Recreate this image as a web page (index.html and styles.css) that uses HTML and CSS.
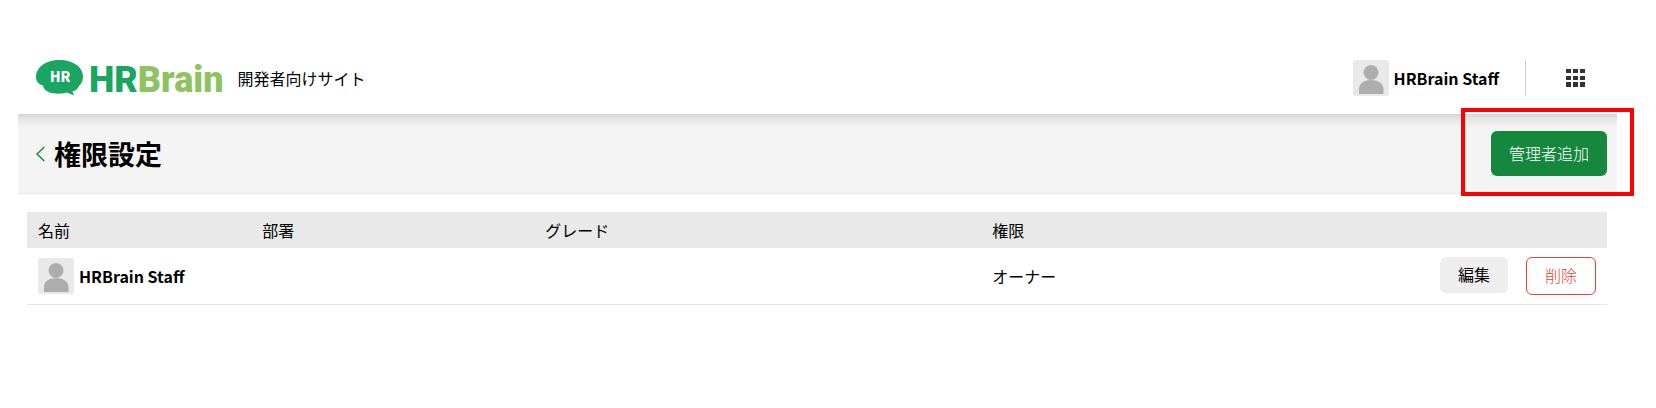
FILE: index.html
```
<!DOCTYPE html>
<html lang="ja">

<head>
    <meta charset="UTF-8">
    <meta name="viewport" content="width=device-width, initial-scale=1.0">
    <title>権限設定 | HRBrain</title>
    <link rel="stylesheet" href="styles.css">
</head>

<body>
    <header class="header">
        <a href="#" class="logo">
            <svg class="logo-mark" viewBox="0 0 47 36" aria-hidden="true">
                <path fill="#18a661" d="M23.500 0C37 0 47 7 47 16.500C47 21 45.500 24 43 26C42 29 39 31 36.500 31.500L38 35.500L31 32.500C23 35 8 34 7 25.500C2.500 24.500 0 21 0 17C0 7 10 0 23.500 0Z" />
                <text class="logo-mark-text" x="24" y="22" text-anchor="middle">HR</text>
            </svg>
            <span class="logo-text"><span class="logo-hr">HR</span><span class="logo-brain">Brain</span></span>
        </a>
        <span class="site-name">開発者向けサイト</span>
        <div class="account">
            <svg class="avatar" viewBox="0 0 36 36" aria-hidden="true">
                <rect width="36" height="36" rx="3" fill="#e9e9e9" />
                <circle cx="18" cy="12.500" r="7.500" fill="#adadad" />
                <path fill="#adadad" d="M6 34V29C6 23 12 20 18 20S30.500 23 30.500 29V34Z" />
            </svg>
            <span class="user-name">HRBrain Staff</span>
        </div>
        <button type="button" class="menu-button" aria-label="メニュー">
            <svg class="menu-icon" viewBox="0 0 19 18" aria-hidden="true">
                <path fill="#333" d="M0 0h5v4H0zM7 0h5v4H7zM14 0h5v4h-5zM0 7h5v4H0zM7 7h5v4H7zM14 7h5v4h-5zM0 13h5v5H0zM7 13h5v5H7zM14 13h5v5h-5z" />
            </svg>
        </button>
    </header>

    <main>
        <div class="title-bar">
            <a href="#" class="back" aria-label="戻る">
                <svg class="back-icon" viewBox="0 0 9 16" aria-hidden="true">
                    <path fill="none" stroke="#15883e" stroke-width="1.500" d="M8.300 1L1 8L8.300 15" />
                </svg>
            </a>
            <h1 class="title">権限設定</h1>
            <div class="title-action">
                <button type="button" class="button button-primary">管理者追加</button>
            </div>
        </div>

        <div class="content">
            <table class="admin-table">
                <thead>
                    <tr>
                        <th class="col-name">名前</th>
                        <th class="col-department">部署</th>
                        <th class="col-grade">グレード</th>
                        <th>権限</th>
                        <th class="col-actions"></th>
                    </tr>
                </thead>
                <tbody>
                    <tr>
                        <td>
                            <div class="user">
                                <svg class="avatar" viewBox="0 0 36 36" aria-hidden="true">
                                    <rect width="36" height="36" rx="3" fill="#e9e9e9" />
                                    <circle cx="18" cy="12.500" r="7.500" fill="#adadad" />
                                    <path fill="#adadad" d="M6 34V29C6 23 12 20 18 20S30.500 23 30.500 29V34Z" />
                                </svg>
                                <span class="user-name">HRBrain Staff</span>
                            </div>
                        </td>
                        <td></td>
                        <td></td>
                        <td>オーナー</td>
                        <td>
                            <div class="actions">
                                <button type="button" class="button button-edit">編集</button>
                                <button type="button" class="button button-delete">削除</button>
                            </div>
                        </td>
                    </tr>
                </tbody>
            </table>
        </div>
    </main>
</body>

</html>
```
FILE: styles.css
```
* {
    box-sizing: border-box;
}

body {
    margin: 0;
    padding: 42px 39px 0 18px;
    background-color: #fff;
    color: #000;
    font-family: "Noto Sans CJK JP", sans-serif;
    font-size: 16px;
    line-height: 24px;
}

.header {
    display: flex;
    align-items: center;
    height: 72px;
    padding: 0 18px;
}

.logo {
    display: flex;
    align-items: center;
    gap: 6px;
    text-decoration: none;
}

.logo-mark {
    width: 47px;
    height: 36px;
}

.logo-mark-text {
    fill: #fff;
    font-size: 14px;
    font-weight: 900;
}

.logo-text {
    padding-top: 4px;
    font-family: Roboto, sans-serif;
    font-size: 36px;
    font-weight: 900;
    line-height: 32px;
}

.logo-hr {
    color: #18a661;
}

.logo-brain {
    color: #8fc360;
}

.site-name {
    margin-left: 14px;
}

.account {
    display: flex;
    align-items: center;
    gap: 5px;
    height: 36px;
    margin-left: auto;
    padding-right: 26px;
    border-right: 1px solid #ccc;
}

.user {
    display: flex;
    align-items: center;
    gap: 5px;
}

.avatar {
    flex: none;
    width: 36px;
    height: 36px;
}

.user-name {
    font-weight: bold;
    white-space: nowrap;
}

.menu-button {
    display: flex;
    margin-left: 26px;
    padding: 14px;
    border: none;
    background: none;
    cursor: pointer;
}

.menu-icon {
    width: 19px;
    height: 18px;
}

.title-bar {
    display: flex;
    align-items: center;
    height: 80px;
    padding-left: 18px;
    border-bottom: 1px solid #e9e9e9;
    background: linear-gradient(#d5d5d5, #e6e6e6 5px, #f4f4f4 13px);
}

.back {
    display: flex;
    margin-right: 9px;
}

.back-icon {
    width: 9px;
    height: 16px;
}

.title {
    margin: 0;
    font-size: 27px;
    line-height: 40px;
}

/* highlighted area around the add button, runs past the edges of the bar */
.title-action {
    flex: none;
    align-self: flex-start;
    margin: -6px -17px -4px auto;
    padding: 19px 23px 16px 26px;
    border: 4px solid #f00;
}

.button {
    display: block;
    padding: 0 18px 2px;
    border: none;
    border-radius: 6px;
    font-family: inherit;
    font-size: 16px;
    line-height: 24px;
    cursor: pointer;
}

.button-primary {
    height: 45px;
    background-color: #15883e;
    color: #fff;
    font-weight: 300;
}

.content {
    padding: 18px 10px 0 9px;
}

.admin-table {
    width: 100%;
    border-collapse: collapse;
    table-layout: fixed;
}

.admin-table th {
    height: 36px;
    padding: 0 11px;
    background-color: #e9e9e9;
    font-weight: normal;
    text-align: left;
}

.admin-table td {
    height: 56px;
    padding: 0 11px;
    border-bottom: 1px solid #e5e5e5;
}

.col-name {
    width: 14.2%;
}

.col-department {
    width: 17.9%;
}

.col-grade {
    width: 28.3%;
}

.col-actions {
    width: 20%;
}

.actions {
    display: flex;
    justify-content: flex-end;
    align-items: flex-start;
    gap: 18px;
}

.button-edit {
    height: 36px;
    background-color: #eee;
    color: #000;
}

.button-delete {
    height: 38px;
    border: 1px solid #dc4437;
    background-color: #fff;
    color: #dc4437;
    font-weight: 300;
}
```
